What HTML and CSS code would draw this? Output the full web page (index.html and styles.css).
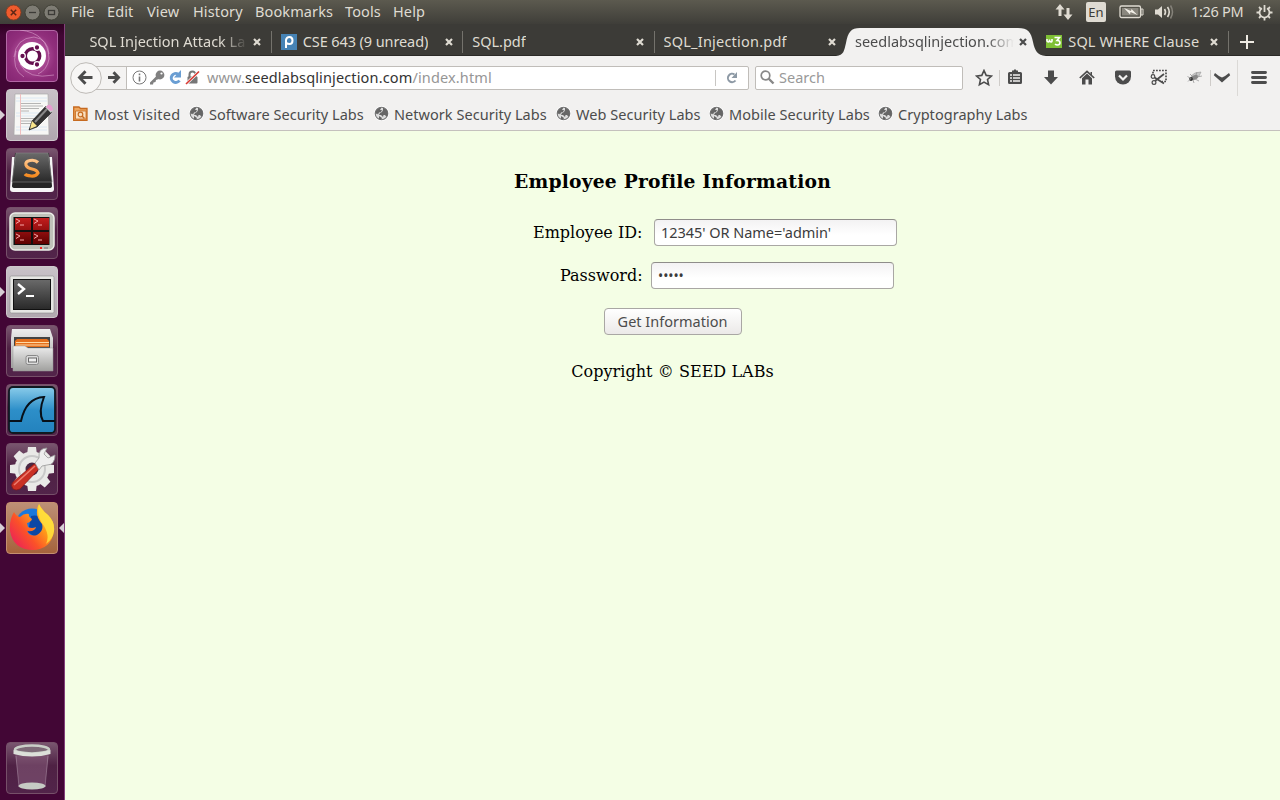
FILE: index.html
```html
<!DOCTYPE html>
<html lang="en">
<head>
<meta charset="utf-8">
<title>Employee Profile Information</title>
<link rel="stylesheet" href="styles.css">
</head>
<body>
<svg width="0" height="0" class="defs">
  <defs>
    <linearGradient id="dark" x1="0" y1="0" x2="0" y2="1"><stop offset="0" stop-color="#6a6a6a"/><stop offset="1" stop-color="#292929"/></linearGradient>
    <linearGradient id="silver" x1="0" y1="0" x2="0" y2="1"><stop offset="0" stop-color="#eee"/><stop offset="1" stop-color="#a0a09e"/></linearGradient>
    <linearGradient id="red" x1="0" y1="0" x2="0" y2="1"><stop offset="0" stop-color="#c31d1d"/><stop offset="1" stop-color="#5e0000"/></linearGradient>
    <linearGradient id="blue" x1="0" y1="0" x2="0" y2="1"><stop offset="0" stop-color="#8accea"/><stop offset=".5" stop-color="#2d8fc9"/><stop offset="1" stop-color="#2382bd"/></linearGradient>
    <linearGradient id="ffx" x1=".95" y1=".1" x2=".1" y2=".8"><stop offset="0" stop-color="#ffe83a"/><stop offset=".4" stop-color="#ff9a1a"/><stop offset=".7" stop-color="#fb5228"/><stop offset="1" stop-color="#ee2a50"/></linearGradient>
    <linearGradient id="orange" x1="0" y1="0" x2="0" y2="1"><stop offset="0" stop-color="#ffc58a"/><stop offset="1" stop-color="#f58a1f"/></linearGradient>
    <symbol id="close" viewBox="0 0 8 8"><path d="M1 1l6 6M7 1L1 7" stroke="currentColor" stroke-width="2.2" fill="none"/></symbol>
    <symbol id="globe" viewBox="0 0 16 16"><circle cx="7.500" cy="7.500" r="7.500" fill="#fff"/><circle cx="7.500" cy="7.500" r="6.300" fill="#dedede" stroke="#777" stroke-width="1.100"/><path d="M1.500 6c1-3 3-4.500 6-4.500L6 4l2 0-1 2-2 .5-1 2-1-1-1.500 1zM9 1.500l4 2.500 1 4-1.500 3L11 9 9.500 9 9 11 7 9 5 9 6 7l2-1 1-2zM5 10l3 2-1 2-2-1z" fill="#666"/></symbol>
  </defs>
</svg>

<header class="panel">
  <div class="win-buttons">
    <svg width="56" height="18" viewBox="0 0 56 18"><circle cx="9.500" cy="8.500" r="7.500" fill="#ef5b2d" stroke="#823a20" stroke-width=".8"/><path d="M6.800 5.800l5.400 5.400M12.200 5.800l-5.400 5.400" stroke="#5d2615" stroke-width="1.500"/><circle cx="28.500" cy="8.500" r="7.500" fill="#7e7c74" stroke="#39382f" stroke-width=".8"/><path d="M25 8.500h7" stroke="#3c3b37" stroke-width="1.300"/><circle cx="47.500" cy="8.500" r="7.500" fill="#7e7c74" stroke="#39382f" stroke-width=".8"/><rect x="44.500" y="6.500" width="6" height="4" fill="none" stroke="#3c3b37" stroke-width="1.300"/></svg>
  </div>
  <nav class="menu"><span>File</span><span>Edit</span><span>View</span><span>History</span><span>Bookmarks</span><span>Tools</span><span>Help</span></nav>
  <div class="indicators">
    <svg class="net" width="18" height="18" viewBox="0 0 18 18" fill="#dfdbd2"><path d="M5 1L0.500 6.500H3.500V13H6.500V6.500H9.500zM13 17L8.500 11.500H11.500V5H14.500V11.500H17.500z"/></svg>
    <span class="lang">En</span>
    <svg class="batt" width="25" height="16" viewBox="0 0 25 16"><rect x="1" y="2" width="20.500" height="11.500" rx="1.500" fill="none" stroke="#dfdbd2" stroke-width="1.300"/><rect x="3" y="4" width="16.500" height="7.500" fill="#8a877e"/><path d="M22 5h2v6h-2z" fill="none" stroke="#dfdbd2"/><path d="M5 4l7 3 .5-2 6 6-7-3-.5 2.500z" fill="#f3f0e8"/></svg>
    <svg class="vol" width="21" height="16" viewBox="0 0 21 16"><path d="M1 5.500h3l4-3.500v12l-4-3.500H1z" fill="#dfdbd2"/><path d="M10.500 5q2 3 0 6M13.500 3q3.500 5 0 10" fill="none" stroke="#dfdbd2" stroke-width="1.600"/><path d="M16.500 1.500q4 6.500 0 13" fill="none" stroke="#85827a" stroke-width="1.500"/></svg>
    <span class="clock">1:26 PM</span>
    <svg class="gear" width="17" height="17" viewBox="0 0 17 17"><path d="M6 4.200A5 5 0 1 0 11 4.200" fill="none" stroke="#dfdbd2" stroke-width="1.800"/><path d="M8.500 1v7M3 3l1.800 1.800M14 3l-1.800 1.800M.5 8.500h3M13.500 8.500h3M3 14l1.800-1.800M14 14l-1.800-1.800M8.500 13.500v3" stroke="#dfdbd2" stroke-width="1.800"/></svg>
  </div>
</header>

<div class="desktop">
<aside class="launcher">
  <div class="tile ubuntu"><svg viewBox="0 0 52 52"><g fill="none" stroke="#e7b5dc" stroke-opacity=".5"><path d="M8 27Q10 8 28 7Q42 9 43 24M18 47Q5 39 10 21M14 0Q42 3 43 29Q41 40 32 44M48 45Q22 50 14 34"/></g><circle cx="26" cy="26" r="14" fill="#fff"/><circle cx="26.500" cy="26" r="7.200" fill="none" stroke="#65104f" stroke-width="3.400"/><g fill="#65104f" stroke="#fff" stroke-width="1.300"><circle cx="16.500" cy="26" r="2.800"/><circle cx="31" cy="17.500" r="2.800"/><circle cx="31" cy="34.500" r="2.800"/></g></svg></div>
  <div class="tile light running"><svg viewBox="0 0 52 52"><path d="M9 5h33l1 41H8z" fill="#f7f7f5" stroke="#aaa" stroke-width=".7"/><path d="M10 9h31M10 12h31M10 24h31M10 27h31M10 38h31M10 41h31" stroke="#dbe8f3"/><path d="M14.500 5v41" stroke="#efc0c0"/><path d="M15 14.500h20M15 17h22M15 19.500h18M15 22h8M15 29.500h14M15 32h15M15 34.500h12" stroke="#a3a3a3" stroke-width=".8"/><path d="M26 32L40 17l6 6-15 15-8 3z" fill="#333" stroke="#111" stroke-width=".6"/><path d="M29 33l12-13" stroke="#888" stroke-width="2"/><path d="M39 18l3-2 5 5-2 3z" fill="#ccc"/><path d="M42 16q4-1 5 5l-2 1-5-4z" fill="#e89bd0"/><path d="M26 32l5 5-7 3z" fill="#f7e48b"/></svg></div>
  <div class="tile"><svg viewBox="0 0 52 52"><path d="M6 9h40l2 32q0 3-3 3H7q-3 0-3-3z" fill="#f5f5f5"/><path d="M9 5h34l3 33q0 2-3 2H9q-3 0-3-2z" fill="#242424"/><path d="M10 5h32l4 29H6z" fill="url(#dark)" stroke="#888" stroke-width=".6"/><path d="M32 14.500Q29 11.500 24 12.500T20 17Q21 20 26 21T32 25Q30 28.500 25 28T19 26" fill="none" stroke="url(#orange)" stroke-width="3.200"/></svg></div>
  <div class="tile"><svg viewBox="0 0 52 52"><rect x="4" y="6" width="44" height="37" rx="5" fill="#bfc1b9" stroke="#eceee8" stroke-width="1.500"/><rect x="7.500" y="10" width="36" height="28" fill="#111"/><path d="M9 11h16v12H9zM27 11h16v12H27zM9 25h16v12H9zM27 25h16v12H27z" fill="url(#red)"/><path d="M10 12l4 2-4 2.500M14 18h4M28 12l4 2-4 2.500M32 18h4M10 27l4 2-4 2.500M14 33h4M28 27l4 2-4 2.500M32 33h4" fill="none" stroke="#f7a7a7" stroke-width="1"/><circle cx="35" cy="41" r="1.100" fill="red"/><rect x="38" y="40" width="4" height="2" fill="#999"/></svg></div>
  <div class="tile light running"><svg viewBox="0 0 52 52"><rect x="4" y="10" width="44" height="37" rx="1.500" fill="#e6e6e3" stroke="#8b8b8b" stroke-width=".6"/><rect x="7.500" y="13.500" width="37" height="30" fill="url(#dark)" stroke="#111"/><path d="M12 18l6 5-6 5" fill="none" stroke="#fff" stroke-width="2.400"/><path d="M20 30h8" stroke="#fff" stroke-width="2"/></svg></div>
  <div class="tile"><svg viewBox="0 0 52 52"><path d="M6 4h38l3 9v30H5V13z" fill="url(#silver)"/><path d="M8 12h36v12H8z" fill="#444"/><path d="M9 16l2-2h30l2 2v6H9z" fill="#e56f1c"/><path d="M10 17.500h33M10 20h33" stroke="#ffd9a5" stroke-width="1.200"/><path d="M7 21h12l3 2h25v23H7z" fill="url(#silver)" stroke="#999" stroke-width=".5"/><rect x="20" y="30.500" width="12.500" height="9" rx="2" fill="#ddd" stroke="#888"/><rect x="22.500" y="33" width="8" height="4" fill="#eee" stroke="#666"/></svg></div>
  <div class="tile"><svg viewBox="0 0 52 52"><rect x="3" y="3" width="46" height="46" rx="4" fill="url(#blue)" stroke="#101820" stroke-width="1.800"/><path d="M3 37h12Q20 14 38 13Q32 28 37 37h12" fill="none" stroke="#071019" stroke-width="2"/></svg></div>
  <div class="tile"><svg viewBox="0 0 52 52"><g fill="#e9e9e7"><circle cx="26" cy="26" r="17.500"/><path d="M22 4h8l1 8H21zM22 48h8l1-8H21zM4 22v8l8 1V21zM48 22v8l-8 1V21z"/><path d="M22 4h8l1 8H21zM22 48h8l1-8H21zM4 22v8l8 1V21zM48 22v8l-8 1V21z" transform="rotate(45 26 26)"/></g><circle cx="26" cy="26" r="13" fill="none" stroke="#c9c9c9" stroke-width="2"/><circle cx="26" cy="26" r="6.500" fill="#4b2944"/><path d="M7 46q-3-4 0-7l21-18q5 0 5 5L14 46q-4 2-7 0z" fill="#c93024" stroke="#841515" stroke-width=".7"/><path d="M8 42L29 23" stroke="#ee7d6e" stroke-width="1.600"/><path d="M29 20l4-5q-1-10 8-10l-3 6 4 4 7-3q0 10-8 10l-5 1-3 4z" fill="#eee" stroke="#999" stroke-width=".8"/></svg></div>
  <div class="tile firefox running focused"><svg viewBox="0 0 52 52"><circle cx="26" cy="23" r="16.500" fill="#1a78dc"/><path d="M25 14q8-2 12 5v10l-8 6-7-5z" fill="#0c47a5"/><path d="M8 10Q10 14 14 15Q18 11 23 12Q22 15 26 17Q25 20 21 21L22 25Q26 27 30 25Q29 30 21 29Q24 35 31 33Q38 29 36 22Q30 15 31 9Q31 5 33 2Q36 8 42 13Q49 20 48 29Q45 48 26 48Q7 47 4 29Q3 18 8 10z" fill="url(#ffx)"/><path d="M33 2Q35 8 42 13Q49 20 48 29Q47 37 40 42Q44 34 38 24Q30 14 33 2z" fill="#ffe13d" fill-opacity=".85"/></svg></div>
  <div class="tile trash"><svg viewBox="0 0 52 52"><path d="M9 10l4 34q13 5 26 0l4-34z" fill="#a57d9b" fill-opacity=".35"/><ellipse cx="26" cy="44" rx="13.500" ry="3.500" fill="#c6cbc4"/><path d="M10 14l3 31M42 14l-3 31" stroke="#cbbac8" stroke-opacity=".35"/><ellipse cx="26" cy="7.500" rx="17" ry="4" fill="#7e6a78" stroke="#c9cec7" stroke-width="2.500"/><path d="M7.500 8v4q18.500 5 37 0V8q-18.500 6-37 0z" fill="#dcdfd9"/></svg></div>
</aside>

<main class="browser">
  <div class="tabs">
    <div class="tab"><span class="title fade t1">SQL Injection Attack La</span><svg class="x"><use href="#close"/></svg></div>
    <div class="tab"><svg class="fav" viewBox="0 0 16 16"><path d="M0 0h16v16H0z" fill="#4683b5"/><path d="M5 14V6Q5.500 3 8.500 3t3 3.500T8.500 10Q6.500 10 5.500 9" fill="none" stroke="#fff" stroke-width="2"/></svg><span class="title t2">CSE 643 (9 unread)</span><svg class="x"><use href="#close"/></svg></div>
    <div class="tab"><span class="title t3">SQL.pdf</span><svg class="x"><use href="#close"/></svg></div>
    <div class="tab before-active"><span class="title t4">SQL_Injection.pdf</span><svg class="x"><use href="#close"/></svg></div>
    <div class="tab active"><svg class="shape" width="214" height="28" viewBox="0 0 214 28"><path d="M0 28C8 27 8 23 10 15C12 4 15 0 24 0H182C192 0 195 4 197 14C199 23 201 27 210 28z" fill="#f2f1f0"/></svg><span class="title fade t5">seedlabsqlinjection.com</span><svg class="x"><use href="#close"/></svg></div>
    <div class="tab"><svg class="fav" viewBox="0 0 16 16"><path d="M0 1h16v13H0z" fill="#7fc035"/><path d="M1 5v2q1 2 2.500 0V5.500v1.500q2 2 2.500 0V5M8.500 3.500h5L11 6.500q3 0 3 2.200T11.500 11Q10 11 9 10" fill="none" stroke="#fff" stroke-width="1.600"/></svg><span class="title t6">SQL WHERE Clause</span><svg class="x"><use href="#close"/></svg></div>
    <svg class="plus" viewBox="0 0 14 14"><path d="M7 0v14M0 7h14" stroke="#eeeae2" stroke-width="2"/></svg>
  </div>

  <div class="toolbar">
    <svg class="back" viewBox="0 0 32 32"><circle cx="16" cy="16" r="15.300" fill="#f7f6f5" stroke="#bdbab6"/><path d="M22.500 15.500H10M15.500 9.300L9.500 15.500l6 6.200" fill="none" stroke="#4c4c4c" stroke-width="2.900"/></svg>
    <div class="urlbar">
      <div class="forward"><svg width="14" height="14" viewBox="0 0 14 14"><path d="M1 6.500h10M6.500 1.300L11.500 6.500l-5 5.200" fill="none" stroke="#4c4c4c" stroke-width="2.900"/></svg></div>
      <svg class="ident" width="70" height="16" viewBox="0 0 70 16"><circle cx="7.500" cy="7.500" r="6.500" fill="none" stroke="#777"/><path d="M7.500 6.500v5M7.500 3.500v1.700" stroke="#777" stroke-width="1.600"/><circle cx="28" cy="5" r="4.400" fill="#808080"/><circle cx="29.500" cy="3.500" r="1.100" fill="#fff"/><path d="M24.500 6L18 12.500l0 2 3 0 .5-2 2-.5.500-2 3-1" fill="#808080"/><path d="M47.500 10.500A4.500 4.500 0 1 1 46 4" fill="none" stroke="#6a9ed3" stroke-width="3"/><path d="M49 0v7.500h-7z" fill="#6a9ed3"/><rect x="55.500" y="6.500" width="10" height="7" rx="1" fill="#777"/><path d="M57.500 7V4.500a3 3 0 0 1 6 0v2.500" fill="none" stroke="#777" stroke-width="2"/><path d="M54 14L67 1.500" stroke="#fff" stroke-width="3"/><path d="M54 14L67 1.500" stroke="#d83a33" stroke-width="1.700"/></svg>
      <span class="url">www.<b>seedlabsqlinjection.com</b>/index.html</span>
      <div class="reload"><svg width="14" height="14" viewBox="0 0 14 14"><path d="M10.500 9.500A4.200 4.200 0 1 1 9.500 3.500" fill="none" stroke="#8d99a5" stroke-width="2"/><path d="M12 1V7H6.500z" fill="#8d99a5"/></svg></div>
    </div>
    <div class="search"><svg width="16" height="16" viewBox="0 0 16 16"><circle cx="5.500" cy="5.500" r="4.300" fill="none" stroke="#888" stroke-width="1.700"/><path d="M8.500 8.500l5 5" stroke="#888" stroke-width="2.400"/></svg><span>Search</span></div>
    <div class="tools">
      <svg viewBox="0 0 18 18"><path d="M9 1.500l2.200 4.900 5.200.6-3.900 3.500 1.100 5.200L9 13.100l-4.600 2.600 1.100-5.200L1.600 7l5.200-.6z" fill="none" stroke="#4c4c4c" stroke-width="1.600"/></svg>
      <i class="rule r1"></i>
      <svg class="s2" viewBox="0 0 18 18"><path d="M6 3V1.500h1.500L9 0l1.500 1.500H12V3h2.500Q16 3 16 4.500v9q0 1.500-1.500 1.500h-11Q2 15 2 13.500v-9Q2 3 3.500 3z" fill="#4c4c4c"/><path d="M4 6h2M7 6h7M4 9h2M7 9h7M4 12h2M7 12h7" stroke="#f2f1f0" stroke-width="1.500"/></svg>
      <svg class="s3" viewBox="0 0 18 18"><path d="M6 1.500h6V8h4l-7 7.500L2 8h4z" fill="#4c4c4c"/></svg>
      <svg class="s3" viewBox="0 0 18 18"><path d="M1.800 9L9 2.300l7.200 6.700" fill="none" stroke="#4c4c4c" stroke-width="1.700"/><path d="M12.500 3h1.500v4l-1.500-1.500zM4 9.200l5-4.600 5 4.600v6.300h-3.500v-5h-3v5H4z" fill="#4c4c4c"/></svg>
      <svg class="s3" viewBox="0 0 18 18"><path d="M2.500 1.500h13Q17 1.500 17 3v4.500a8 8 0 0 1-16 0V3Q1 1.500 2.500 1.500z" fill="#4c4c4c"/><path d="M5 6.500l4 4 4-4" fill="none" stroke="#f2f1f0" stroke-width="2.200"/></svg>
      <svg class="s3" viewBox="0 0 18 18"><path d="M3 4.500v-3h13v11H12" fill="none" stroke="#4c4c4c" stroke-width="1.700" stroke-dasharray="1.800 1.200"/><circle cx="3" cy="7.500" r="1.800" fill="none" stroke="#4c4c4c" stroke-width="1.200"/><circle cx="4" cy="13.500" r="1.900" fill="none" stroke="#4c4c4c" stroke-width="1.200"/><path d="M4.500 8.500l9.500 6M5 12l9-7" stroke="#4c4c4c" stroke-width="1.800"/></svg>
      <svg class="s3" viewBox="0 0 18 18"><path d="M5 7l4-3 6-1-2 4-3 2z" fill="#c8c8c8" stroke="#999" stroke-width=".6"/><ellipse cx="8.500" cy="8.500" rx="3.800" ry="2.200" transform="rotate(-25 8.500 8.500)" fill="#888"/><circle cx="5" cy="10" r="1.900" fill="#333"/><path d="M1.500 7.500l3.500 2-3 3M7 11l1 3M9 10l4 2M11 8l5-1M6 7L4 5M10 6l1-3" fill="none" stroke="#999" stroke-width=".8"/></svg>
      <i class="rule r2"></i>
      <svg class="chev" viewBox="0 0 18 18"><path d="M2 4q4 3.500 7 4.500Q12 7.500 16 4l1.200 2.200L9 13.500.8 6.200z" fill="#4c4c4c"/></svg>
      <i class="rule r3"></i>
      <svg class="burger" viewBox="0 0 18 18"><path d="M2.500 3.500h13M2.500 8.500h13M2.500 13.500h13" stroke="#4c4c4c" stroke-width="2.900" stroke-linecap="round"/></svg>
    </div>
  </div>

  <div class="bookmarks">
    <span class="bm b1"><svg viewBox="0 0 16 16"><path d="M.700 2.500V1H6l1.500 1.500H14V14.300H.700z" fill="#efa65d" stroke="#c66a20" stroke-width="1.300"/><path d="M2.500 5h10.500v8H2.500z" fill="#fae0c0" stroke="#c66a20" stroke-width=".8"/><circle cx="7.500" cy="8.500" r="2.300" fill="none" stroke="#c66a20" stroke-width="1.200"/><path d="M9 10l2.500 2.500" stroke="#c66a20" stroke-width="1.500"/></svg>Most Visited</span>
    <span class="bm b2"><svg><use href="#globe"/></svg>Software Security Labs</span>
    <span class="bm b3"><svg><use href="#globe"/></svg>Network Security Labs</span>
    <span class="bm b4"><svg><use href="#globe"/></svg>Web Security Labs</span>
    <span class="bm b5"><svg><use href="#globe"/></svg>Mobile Security Labs</span>
    <span class="bm b6"><svg><use href="#globe"/></svg>Cryptography Labs</span>
  </div>

  <section class="page">
    <h3>Employee Profile Information</h3>
    <div class="row eid"><label for="eid">Employee ID:</label><input id="eid" type="text" value="12345' OR Name='admin'"></div>
    <div class="row pwd"><label for="pwd">Password:</label><input id="pwd" type="password" value="admin"></div>
    <button type="button">Get Information</button>
    <p>Copyright © SEED LABs</p>
  </section>
</main>
</div>
</body>
</html>
```
FILE: styles.css
```css
* { box-sizing: border-box; }
body { margin: 0; width: 1280px; height: 800px; overflow: hidden; display: flex; flex-direction: column; font-family: "Noto Sans", "Open Sans", sans-serif; font-size: 14.5px; line-height: 20px; white-space: nowrap; }
svg { display: block; flex: none; }
.defs { position: absolute; }
.panel { height: 24px; flex: none; display: flex; align-items: center; background: linear-gradient(#5c5a4f, #3f3e39); color: #dfdbd2; }
.win-buttons { width: 71px; padding: 1px 0 0 4px; }
.menu { display: grid; grid-template-columns: 36px 40px 46px 62px 90px 48px 40px; padding-bottom: 2px; letter-spacing: .12px; }
.indicators { margin-left: auto; display: flex; align-items: center; padding-right: 7px; }
.lang { width: 20px; height: 20px; margin: 0 13px 0 13px; border-radius: 2px; background: #dfdbd2; color: #3c3b37; text-align: center; font-size: 13px; }
.vol { margin-left: 10px; }
.clock { width: 53px; margin-left: 16px; padding-bottom: 2px; letter-spacing: -.3px; }
.gear { margin-left: 12px; }
.desktop { flex: 1; min-height: 0; display: flex; }
.launcher { width: 65px; flex: none; display: flex; flex-direction: column; gap: 7px; padding: 6px 0 6px 6px; background: linear-gradient(#300022, #420635 12px, #420635); border-right: 1px solid #84407b; }
.tile { position: relative; width: 52px; height: 52px; border-radius: 4px; border: 1px solid #765069; background: linear-gradient(#79566f, #4f2144 45%, #52244a); }
.tile svg { width: 52px; height: 52px; margin: -1px; }
.ubuntu { background: radial-gradient(circle, #cf72b9, #912f7c 65%, #842572); border-color: #b267a5; }
.light { background: linear-gradient(#c9c2c8, #b1a8af); border-color: #cec8cc; }
.firefox { background: linear-gradient(#bd9076, #a5633c); border-color: #c58f70; }
.trash { margin-top: auto; }
.running::before { content: ""; position: absolute; left: -7px; top: 20px; border: 5px solid transparent; border-left-color: #d7ced5; border-right: 0; }
.focused::after { content: ""; position: absolute; right: -7px; top: 20px; border: 5px solid transparent; border-right-color: #d7ced5; border-left: 0; }
.browser { flex: 1; min-width: 0; display: flex; flex-direction: column; background: #f2f1f0; }
.tabs { height: 32px; flex: none; display: flex; padding-left: 15.6px; background: #3c3b37; box-shadow: inset 0 -1px #2b2a27; color: #dfdbd2; }
.tab { position: relative; width: 191.4px; flex: none; display: flex; align-items: center; padding: 4px 10.6px 0 8.8px; }
.tab::after { content: ""; position: absolute; right: 0; top: 7px; height: 22px; width: 1px; background: #74726c; }
.before-active::after, .active::after { display: none; }
.fav { width: 16px; height: 16px; margin-right: 6px; }
.title { position: relative; top: -1px; overflow: hidden; }
.t2 { letter-spacing: -.1px; }
.t4 { letter-spacing: .22px; }
.t6 { letter-spacing: .12px; }
.fade { width: 159px; -webkit-mask-image: linear-gradient(90deg, #000 83%, transparent); mask-image: linear-gradient(90deg, #000 83%, transparent); }
.x { position: relative; width: 8px; height: 8px; margin-left: auto; }
.active { color: #4c4c4c; }
.shape { position: absolute; left: -10px; top: 4px; }
.plus { width: 14px; height: 14px; margin: 11px 0 0 11px; }
.toolbar { height: 43px; flex: none; display: flex; align-items: center; padding-left: 5px; }
.back { position: relative; z-index: 1; width: 32px; height: 32px; }
.urlbar { width: 663px; height: 24px; margin-left: -16px; display: flex; align-items: center; background: #fff; border: 1px solid #c0bdb9; border-radius: 2px; }
.forward { width: 40px; height: 22px; padding: 4px 0 0 20px; border-right: 1px solid #c0bdb9; background: #f4f3f2; }
.ident { margin-left: 5px; }
.url { margin-left: 5px; padding-bottom: 2px; color: #969696; letter-spacing: .14px; }
.url b { font-weight: 400; color: #333; }
.reload { margin-left: auto; width: 33px; height: 16px; border-left: 1px solid #c8c6c3; padding: 1px 0 0 9px; }
.search { width: 208px; height: 24px; margin-left: 6px; display: flex; align-items: center; padding-left: 4px; gap: 3px; background: #fff; border: 1px solid #c0bdb9; border-radius: 2px; color: #999; }
.search span { padding-bottom: 2px; }
.tools { display: flex; align-items: center; height: 43px; padding-left: 12px; }
.tools svg { width: 18px; height: 18px; }
.rule { width: 1px; height: 16px; background: #cfccc9; }
.r1 { margin-left: 6px; }
.s2 { margin-left: 6px; }
.tools .s3 { margin-left: 18px; }
.r2 { margin-left: 6px; }
.chev { margin-left: 2px; }
.r3 { height: 36px; margin-left: 6px; background: #dbd9d6; }
.burger { margin-left: 12px; }
.bookmarks { height: 32px; flex: none; display: grid; grid-template-columns: 116px 185px 182px 153px 169px 160px; padding-left: 8px; border-bottom: 1px solid #c4c1bd; color: #4c4c4c; }
.bm { display: flex; align-items: center; height: 29px; letter-spacing: .04px; }
.bm svg { width: 16px; height: 16px; margin-right: 4px; }
.b1 { letter-spacing: .25px; }
.b1 svg { margin-right: 5px; }
.page { flex: 1; display: flex; flex-direction: column; align-items: center; background: #f4fee5; font-family: "DejaVu Serif", serif; font-size: 16px; color: #000; }
h3 { margin: 39px 0 0; font-size: 18.72px; line-height: 22px; letter-spacing: .2px; }
.row { display: flex; align-items: center; height: 27px; }
.eid { margin: 27px 0 0 85px; width: 364px; justify-content: space-between; }
.pwd { margin: 16px 0 0 109px; width: 334px; justify-content: space-between; }
.page input { width: 243px; height: 27px; padding: 0 6px 2px; border: 1px solid #a9a7a4; border-top-color: #8f8d8a; border-radius: 4px; background: linear-gradient(#f3f2f3, #fff 60%); font: 14.5px "Noto Sans", sans-serif; letter-spacing: -.04px; color: #3c3c3c; outline: 0; }
.page #pwd { font-size: 13.8px; padding-bottom: 0; }
.page button { width: 138px; height: 27px; margin-top: 19px; padding: 0 0 2px; border: 1px solid #a9a7a4; border-radius: 4px; background: linear-gradient(#fff, #ebe9e8); font: 14.5px "Noto Sans", sans-serif; color: #4c4c4c; }
.page p { margin: 27px 0 0; letter-spacing: .05px; }
```
